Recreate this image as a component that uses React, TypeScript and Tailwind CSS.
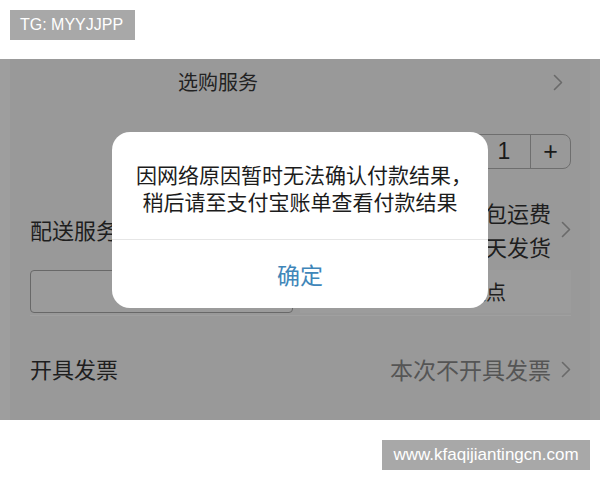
import React from "react";

const cjk = { fontFamily: '"Noto Sans CJK SC", "Noto Sans", sans-serif' };
const latin = { fontFamily: '"Liberation Sans", Arial, sans-serif' };

function Chevron({ className = "" }: { className?: string }) {
  return (
    <svg width="10" height="17" viewBox="0 0 10 17" className={className} fill="none">
      <path d="M1.5 1.5 L8.5 8.5 L1.5 15.5" stroke="#6a6a6a" strokeWidth="1.6" strokeLinecap="round" strokeLinejoin="round" />
    </svg>
  );
}

export default function App() {
  return (
    <div className="w-[600px] h-[480px] bg-white flex flex-col overflow-hidden" style={cjk}>
      {/* top watermark */}
      <div className="h-[59px] shrink-0 pt-[10px] pl-[10px]">
        <div className="w-[125px] h-[30px] bg-[#a8a8a8] text-white text-[16px] flex items-center pl-[10px]" style={latin}>
          TG: MYYJJPP
        </div>
      </div>

      {/* dimmed screenshot */}
      <div className="relative h-[361px] shrink-0 bg-[#999999] flex">
        <div className="w-[10px] bg-[#9e9e9e]" />
        <div className="flex-1 flex flex-col pl-[20px] pr-[19px]">
          {/* row 1 */}
          <div className="h-[46px] shrink-0 flex items-center">
            <span className="pl-[148px] text-[20px] text-[#222]">选购服务</span>
            <div className="flex-1" />
            <Chevron className="mr-[8px]" />
          </div>
          {/* stepper */}
          <div className="mt-[29px] h-[35px] shrink-0 flex justify-end">
            <div className="w-[130px] h-[35px] border border-[#6e6e6e] rounded-[8px] flex text-[#1a1a1a]">
              <div className="w-[35px]" />
              <div className="w-[54px] border-l border-r border-[#6e6e6e] flex items-center justify-center text-[23px]" style={latin}>1</div>
              <div className="flex-1 flex items-center justify-center text-[25px]" style={latin}>+</div>
            </div>
          </div>
          {/* delivery */}
          <div className="mt-[26px] h-[68px] shrink-0 flex items-center">
            <span className="text-[22px] text-[#1e1e1e]">配送服务</span>
            <div className="flex-1" />
            <div className="flex flex-col items-end text-[22px] leading-[34px] text-[#1e1e1e] mr-[10px]">
              <span>邮包运费</span>
              <span>当天发货</span>
            </div>
            <Chevron />
          </div>
          {/* input row */}
          <div className="mt-[7px] h-[43px] shrink-0 flex gap-[7px]">
            <div className="w-[263px] h-[43px] border border-[#686868] rounded-[4px] bg-[#9b9b9b]" />
            <div className="flex-1 bg-[#9c9c9c] flex items-center pl-[146px] text-[20px] text-[#1e1e1e]">
              <span>自提点</span>
            </div>
          </div>
          <div className="mt-[2px] h-px shrink-0 bg-[#a0a0a0]" />
          {/* invoice */}
          <div className="flex-1 flex items-start pt-[36px]">
            <span className="text-[22px] text-[#1e1e1e]">开具发票</span>
            <div className="flex-1" />
            <span className="text-[23px] text-[#555555] mr-[10px]">本次不开具发票</span>
            <Chevron className="mt-[9px]" />
          </div>
        </div>
        <div className="w-[10px] bg-[#9c9c9c]" />

        {/* alert dialog */}
        <div className="absolute left-[112px] top-[73px] w-[376px] h-[176px] bg-white rounded-[18px] flex flex-col">
          <div className="pt-[29px] pb-[24px] text-center text-[21px] leading-[27px] text-[#1c1c1c]">
            <div className="pl-[8px]">因网络原因暂时无法确认付款结果，</div>
            <div>稍后请至支付宝账单查看付款结果</div>
          </div>
          <div className="h-px bg-[#e6e6e6]" />
          <div className="flex-1 flex items-center justify-center text-[23px] text-[#3f86b9]">确定</div>
        </div>
      </div>

      {/* bottom watermark */}
      <div className="flex-1 flex justify-end pt-[20px] pr-[10px]">
        <div className="w-[208px] h-[30px] bg-[#a8a8a8] text-white text-[17px] flex items-center justify-center" style={latin}>
          www.kfaqijiantingcn.com
        </div>
      </div>
    </div>
  );
}
